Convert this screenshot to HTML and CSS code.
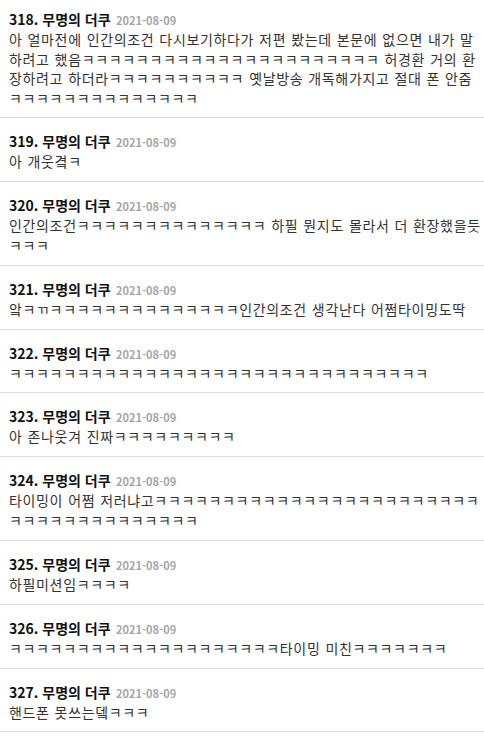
FILE: index.html
```html
<!DOCTYPE html>
<html lang="ko">
<head>
<meta charset="utf-8">
<title>댓글</title>
<link rel="stylesheet" href="styles.css">
</head>
<body>
<ul class="comments">
  <li class="comment">
    <div class="head"><span class="name">318. 무명의 더쿠</span> <span class="date">2021-08-09</span></div>
    <p class="text">아 얼마전에 인간의조건 다시보기하다가 저편 봤는데 본문에 없으면 내가 말하려고 했음ㅋㅋㅋㅋㅋㅋㅋㅋㅋㅋㅋㅋㅋㅋㅋㅋㅋㅋㅋㅋㅋㅋ 허경환 거의 환장하려고 하더라ㅋㅋㅋㅋㅋㅋㅋㅋㅋㅋ 옛날방송 개독해가지고 절대 폰 안줌ㅋㅋㅋㅋㅋㅋㅋㅋㅋㅋㅋㅋㅋㅋ</p>
  </li>
  <li class="comment">
    <div class="head"><span class="name">319. 무명의 더쿠</span> <span class="date">2021-08-09</span></div>
    <p class="text">아 개웃곀ㅋ</p>
  </li>
  <li class="comment">
    <div class="head"><span class="name">320. 무명의 더쿠</span> <span class="date">2021-08-09</span></div>
    <p class="text">인간의조건ㅋㅋㅋㅋㅋㅋㅋㅋㅋㅋㅋㅋㅋㅋ 하필 뭔지도 몰라서 더 환장했을듯ㅋㅋㅋ</p>
  </li>
  <li class="comment">
    <div class="head"><span class="name">321. 무명의 더쿠</span> <span class="date">2021-08-09</span></div>
    <p class="text">앜ㅋㄲㅋㅋㅋㅋㅋㅋㅋㅋㅋㅋㅋㅋㅋㅋ인간의조건 생각난다 어쩜타이밍도딱</p>
  </li>
  <li class="comment">
    <div class="head"><span class="name">322. 무명의 더쿠</span> <span class="date">2021-08-09</span></div>
    <p class="text">ㅋㅋㅋㅋㅋㅋㅋㅋㅋㅋㅋㅋㅋㅋㅋㅋㅋㅋㅋㅋㅋㅋㅋㅋㅋㅋㅋㅋㅋㅋㅋ</p>
  </li>
  <li class="comment">
    <div class="head"><span class="name">323. 무명의 더쿠</span> <span class="date">2021-08-09</span></div>
    <p class="text">아 존나웃겨 진짜ㅋㅋㅋㅋㅋㅋㅋㅋㅋ</p>
  </li>
  <li class="comment">
    <div class="head"><span class="name">324. 무명의 더쿠</span> <span class="date">2021-08-09</span></div>
    <p class="text">타이밍이 어쩜 저러냐고ㅋㅋㅋㅋㅋㅋㅋㅋㅋㅋㅋㅋㅋㅋㅋㅋㅋㅋㅋㅋㅋㅋㅋㅋㅋㅋㅋㅋㅋㅋㅋㅋㅋㅋㅋㅋㅋㅋ</p>
  </li>
  <li class="comment">
    <div class="head"><span class="name">325. 무명의 더쿠</span> <span class="date">2021-08-09</span></div>
    <p class="text">하필미션임ㅋㅋㅋㅋ</p>
  </li>
  <li class="comment">
    <div class="head"><span class="name">326. 무명의 더쿠</span> <span class="date">2021-08-09</span></div>
    <p class="text">ㅋㅋㅋㅋㅋㅋㅋㅋㅋㅋㅋㅋㅋㅋㅋㅋㅋㅋㅋㅋ타이밍 미친ㅋㅋㅋㅋㅋㅋㅋ</p>
  </li>
  <li class="comment">
    <div class="head"><span class="name">327. 무명의 더쿠</span> <span class="date">2021-08-09</span></div>
    <p class="text">핸드폰 못쓰는뎈ㅋㅋㅋ</p>
  </li>
</ul>
</body>
</html>
```

FILE: styles.css
```css
html, body {
  margin: 0;
  padding: 0;
  background: #fff;
}

body {
  font-family: "Noto Sans CJK KR", "Noto Sans", sans-serif;
  color: #333;
}

.comments {
  list-style: none;
  margin: 0;
  padding: 0;
}

.comment {
  padding: 12px 0 9.4px 9px;
  border-bottom: 1px solid #dddddd;
}

.comment:first-child {
  padding-top: 8px;
}

.head {
  height: 20px;
  line-height: 20px;
  margin-bottom: 2px;
  white-space: nowrap;
}

.name {
  font-size: 14px;
  font-weight: 700;
  color: #111;
}

.date {
  font-size: 11px;
  font-weight: 700;
  color: #a6a6a6;
  margin-left: 1px;
}

.text {
  margin: 0;
  font-size: 14px;
  line-height: 19.5px;
  letter-spacing: 0.66px;
  word-spacing: 0.4px;
  color: #333;
}
```
